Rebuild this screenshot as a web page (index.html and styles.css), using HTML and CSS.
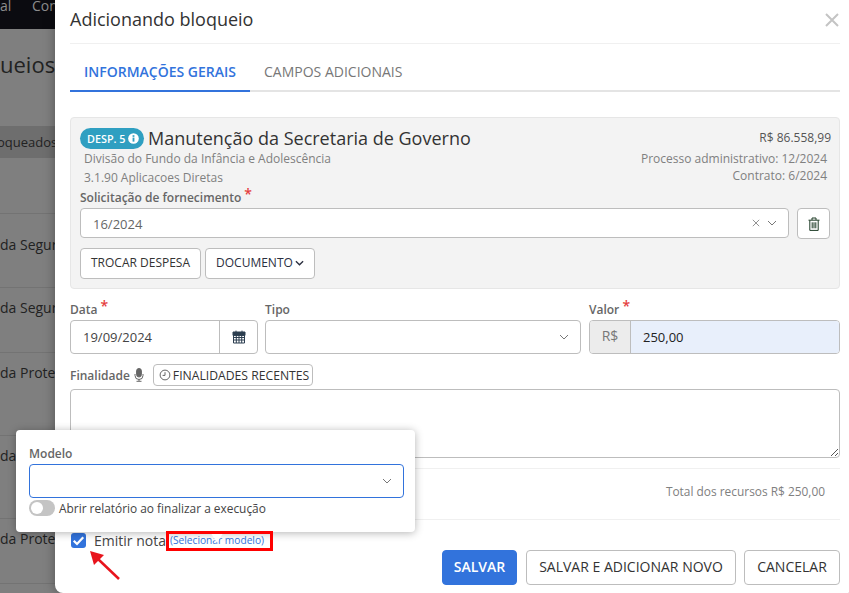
FILE: index.html
```html
<!DOCTYPE html>
<html lang="pt-BR">
<head>
    <meta charset="UTF-8">
    <meta name="viewport" content="width=device-width, initial-scale=1.0">
    <title>Adicionando bloqueio</title>
    <link rel="stylesheet" href="styles.css">
</head>
<body>
    <!-- pagina por tras do modal -->
    <div class="page">
        <nav class="navbar"><span class="nav-one">al</span><span class="nav-two">Con</span></nav>
        <div class="page-title">ueios <span class="page-hint"></span></div>
        <div class="page-tab">oqueados</div>
        <div class="page-row first">da Segura</div>
        <div class="page-row short">da Segura</div>
        <div class="page-row">da Proteg</div>
        <div class="page-row">da</div>
        <div class="page-row short">da Proteg</div>
        <div class="page-row"></div>
    </div>

    <div class="modal">
        <header class="modal-header">
            <h1>Adicionando bloqueio</h1>
            <svg class="close-icon" viewBox="0 0 14 14"><path d="M1 1l12 12M13 1L1 13"/></svg>
        </header>

        <div class="tabs">
            <span class="tab active">INFORMAÇÕES GERAIS</span>
            <span class="tab">CAMPOS ADICIONAIS</span>
        </div>

        <section class="expense-card">
            <div class="expense-top">
                <div>
                    <div class="expense-title">
                        <span class="badge">DESP. 5
                            <svg viewBox="0 0 12 12"><circle cx="6" cy="6" r="5.8" fill="#fff"/><rect x="5" y="5" width="2" height="4.4" fill="#2f9fc1"/><rect x="5" y="2.4" width="2" height="1.8" fill="#2f9fc1"/></svg>
                        </span>
                        <span class="expense-name">Manutenção da Secretaria de Governo</span>
                    </div>
                    <p class="expense-sub">Divisão do Fundo da Infância e Adolescência</p>
                    <p class="expense-sub">3.1.90 Aplicacoes Diretas</p>
                </div>
                <div class="expense-right">
                    <div class="expense-total">R$ 86.558,99</div>
                    <p>Processo administrativo: 12/2024</p>
                    <p>Contrato: 6/2024</p>
                </div>
            </div>

            <label class="field-label">Solicitação de fornecimento <span class="req">*</span></label>
            <div class="supply-row">
                <div class="select supply-select">
                    <span>16/2024</span>
                    <svg class="clear-icon" viewBox="0 0 10 10"><path d="M1 1l8 8M9 1L1 9"/></svg>
                    <svg class="chevron" viewBox="0 0 10 6"><path d="M1 1l4 4 4-4"/></svg>
                </div>
                <button class="btn btn-trash" type="button">
                    <svg viewBox="0 0 12 14"><path d="M.5 3.2h11M4 3V1h4V3M1.8 3.4v10h8.4V3.4M4.2 5.3v6M6 5.3v6M7.8 5.3v6"/></svg>
                </button>
            </div>
            <div class="card-buttons">
                <button class="btn" type="button">TROCAR DESPESA</button>
                <button class="btn btn-doc" type="button">DOCUMENTO<svg viewBox="0 0 10 6"><path d="M1 1l4 4 4-4"/></svg></button>
            </div>
        </section>

        <div class="form-row">
            <div class="col-date">
                <label class="field-label">Data <span class="req">*</span></label>
                <div class="input-group">
                    <span class="input-text">19/09/2024</span>
                    <span class="addon-date">
                        <svg viewBox="0 0 14 14"><path class="cal-top" d="M1 2h12v3.4H1z"/><path d="M1.5 2.5h11v10.5h-11zM1.5 7.5h11M1.5 10h11M4.3 5V13M7 5V13M9.7 5V13M4 .6v2.4M10 .6v2.4"/></svg>
                    </span>
                </div>
            </div>
            <div class="col-type">
                <label class="field-label">Tipo</label>
                <div class="select tall-select">
                    <svg class="chevron" viewBox="0 0 10 6"><path d="M1 1l4 4 4-4"/></svg>
                </div>
            </div>
            <div class="col-value">
                <label class="field-label">Valor <span class="req">*</span></label>
                <div class="input-group">
                    <span class="addon-money">R$</span>
                    <span class="input-money">250,00</span>
                </div>
            </div>
        </div>

        <div class="purpose-row">
            <label class="field-label">Finalidade</label>
            <svg class="mic-icon" viewBox="0 0 10 14"><rect x="2.6" y="0.5" width="4.8" height="8.5" rx="2.4" fill="#666"/><path d="M1 6v1.5a4 4 0 0 0 8 0V6M5 11.5V13M2.5 13.3h5"/></svg>
            <button class="btn btn-recent" type="button">
                <svg viewBox="0 0 12 12"><circle cx="6" cy="6" r="4.9"/><path d="M6 3.2V6.4H3.6"/></svg>FINALIDADES RECENTES
            </button>
        </div>
        <div class="textarea">
            <svg viewBox="0 0 8 8"><path d="M1 8l7-7M5 8l3-3"/></svg>
        </div>

        <div class="total-row">Total dos recursos R$ 250,00</div>

        <footer class="modal-footer">
            <div class="emit">
                <span class="checkbox"><svg viewBox="0 0 12 12"><path d="M2.2 6.2l2.6 2.6 5-5.4"/></svg></span>
                <span class="emit-label">Emitir nota</span>
                <a class="emit-link" href="#">(Selecionar modelo)</a>
            </div>
            <div class="footer-buttons">
                <button class="btn btn-primary" type="button">SALVAR</button>
                <button class="btn btn-large btn-new" type="button">SALVAR E ADICIONAR NOVO</button>
                <button class="btn btn-large btn-cancel" type="button">CANCELAR</button>
            </div>
        </footer>
    </div>

    <!-- popover do modelo -->
    <div class="popover">
        <label class="field-label">Modelo</label>
        <div class="select model-select">
            <svg class="chevron" viewBox="0 0 10 6"><path d="M1 1l4 4 4-4"/></svg>
        </div>
        <div class="toggle-row">
            <span class="toggle"></span>
            <span>Abrir relatório ao finalizar a execução</span>
        </div>
    </div>

    <!-- anotacoes vermelhas sobre o print -->
    <div class="red-box"></div>
    <svg class="red-arrow" viewBox="0 0 34 34"><path class="arrow-line" d="M30 29L9 9"/><path class="arrow-head" d="M1 1l14 4-10 10z"/></svg>
</body>
</html>
```

FILE: styles.css
```css
* {
    box-sizing: border-box;
}

body {
    margin: 0;
    width: 849px;
    height: 593px;
    overflow: hidden;
    position: relative;
    background: #7f7f7f;
    font-family: "Open Sans", "Liberation Sans", sans-serif;
    font-size: 13px;
    color: #333;
}

p {
    margin: 0;
}

svg {
    display: block;
    fill: none;
    stroke: currentColor;
}

/* fundo */
.page {
    height: 593px;
    overflow: hidden;
    color: #222;
}

.navbar {
    height: 29px;
    background: #0b0b10;
    color: #8d8d8d;
    font-size: 14px;
    line-height: 11px;
    display: flex;
}

.nav-one {
    width: 32px;
}

.page-title {
    margin-top: 20px;
    font-size: 22px;
    line-height: 30px;
    height: 77px;
}

.page-hint {
    display: inline-block;
    width: 2px;
    height: 8px;
    background: #7a6220;
}

.page-tab {
    height: 32px;
    background: #6e6e6e;
    line-height: 32px;
    margin-bottom: 55px;
    text-indent: -3px;
}

.page-row {
    height: 83px;
    border-top: 1px solid #737373;
    font-size: 14px;
    line-height: 20px;
    padding-top: 10px;
}

.page-row.first {
    height: 74px;
    padding-top: 21px;
}

.page-row.short {
    height: 65px;
}

/* modal */
.modal {
    position: absolute;
    left: 55px;
    top: -10px;
    width: 800px;
    height: 603px;
    padding: 10px 15px 0;
    background: #fff;
    border-radius: 8px;
    box-shadow: 0 0 12px rgba(0, 0, 0, 0.35);
}

.modal-header {
    height: 44px;
    border-bottom: 1px solid #f0f0f0;
    display: flex;
    justify-content: space-between;
    align-items: flex-start;
}

.modal-header h1 {
    margin: 0;
    font-size: 18px;
    font-weight: 400;
    line-height: 20px;
    padding-top: 9px;
    color: #333;
}

.close-icon {
    width: 14px;
    height: 14px;
    margin-top: 13px;
    margin-right: 1px;
    color: #c4c4c4;
    stroke-width: 2;
}

.tabs {
    margin-top: 11px;
    height: 37px;
    border-bottom: 2px solid #e4e4e4;
    display: flex;
}

.tab {
    padding: 7px 14px 0;
    height: 37px;
    font-size: 14px;
    line-height: 20px;
    color: #777;
}

.tab.active {
    color: #3273dc;
    font-weight: 600;
    border-bottom: 2px solid #3273dc;
}

.expense-card {
    margin-top: 25px;
    height: 172px;
    padding: 9px 9px 0;
    background: #f3f3f3;
    border: 1px solid #e6e6e6;
    border-radius: 4px;
}

.expense-top {
    display: flex;
    justify-content: space-between;
    height: 61px;
}

.expense-title {
    display: flex;
    align-items: center;
    height: 22px;
    gap: 4px;
}

.badge {
    display: flex;
    align-items: center;
    gap: 3px;
    height: 21px;
    width: 64px;
    padding-left: 7px;
    background: #2f9fc1;
    color: #fff;
    border-radius: 11px;
    font-size: 10.8px;
    font-weight: 600;
}

.badge svg {
    width: 11px;
    height: 11px;
    stroke: none;
}

.expense-name {
    font-size: 18px;
    line-height: 22px;
    color: #333;
}

.expense-sub {
    margin-left: 4px;
    font-size: 12px;
    line-height: 19px;
    color: #808080;
}

.expense-right {
    text-align: right;
    font-size: 12px;
    line-height: 17px;
    color: #808080;
    padding: 0 3px 0 0;
}

.expense-total {
    margin-right: -4px;
    height: 23px;
    line-height: 22px;
    color: #555;
}

.field-label {
    display: block;
    font-size: 12px;
    font-weight: 600;
    line-height: 20px;
    color: #666;
}

.req {
    color: #e53e3e;
    font-size: 14px;
    line-height: 10px;
    vertical-align: 3px;
}

.supply-row {
    display: flex;
    gap: 8px;
}

.select {
    position: relative;
    display: flex;
    align-items: center;
    justify-content: flex-end;
    background: #fff;
    border: 1px solid #bdbdbd;
    border-radius: 4px;
}

.supply-select {
    flex: 1;
    height: 30px;
    padding: 0 11px 0 12px;
    gap: 5px;
    color: #666;
}

.supply-select span {
    margin-right: auto;
    padding-top: 2px;
}

.chevron {
    width: 10px;
    height: 6px;
    color: #777;
}

.clear-icon {
    width: 8px;
    height: 8px;
    color: #777;
    margin-right: 2px;
}

.btn {
    height: 31px;
    padding: 0 10px 2px;
    background: #fff;
    border: 1px solid #bdbdbd;
    border-radius: 4px;
    font-family: inherit;
    font-size: 12px;
    color: #333;
}

.btn-trash {
    width: 33px;
    padding: 0;
    display: flex;
    align-items: center;
    justify-content: center;
}

.btn-trash svg {
    width: 12px;
    height: 14px;
    color: #1d3b25;
    stroke-width: 1;
}

.card-buttons {
    display: flex;
    gap: 4px;
    margin-top: 9px;
}

.btn-doc {
    display: flex;
    align-items: center;
    color: #2b2f3f;
    gap: 2px;
}

.btn-doc svg {
    width: 9px;
    height: 6px;
    stroke-width: 1.5;
}

.form-row {
    display: flex;
    gap: 7px;
    margin-top: 11px;
}

.col-date {
    width: 188px;
}

.col-type {
    width: 316px;
    margin-right: 1px;
}

.col-value {
    flex: 1;
}

.input-group {
    display: flex;
    height: 34px;
    border: 1px solid #bdbdbd;
    border-radius: 4px;
    overflow: hidden;
    align-items: stretch;
}

.input-text {
    flex: 1;
    padding-left: 12px;
    line-height: 33px;
    color: #444;
}

.addon-date {
    width: 38px;
    border-left: 1px solid #bdbdbd;
    display: flex;
    align-items: center;
    justify-content: center;
}

.addon-date svg {
    width: 14px;
    height: 14px;
    color: #2c3e50;
}

.cal-top {
    fill: currentColor;
}

.tall-select {
    height: 34px;
    padding-right: 11px;
}

.addon-money {
    width: 41px;
    background: #ececec;
    border-right: 1px solid #bdbdbd;
    text-align: center;
    font-size: 14px;
    line-height: 29px;
    color: #777;
}

.input-money {
    flex: 1;
    background: #e8effb;
    padding-left: 12px;
    line-height: 33px;
    color: #222;
}

.purpose-row {
    display: flex;
    align-items: center;
    height: 22px;
    margin-top: 10px;
}

.purpose-row .field-label {
    padding-top: 1px;
}

.mic-icon {
    width: 10px;
    height: 14px;
    margin: 0 9px 0 4px;
    color: #666;
}

.btn-recent {
    display: flex;
    align-items: center;
    gap: 2px;
    height: 22px;
    padding: 0 5px;
    width: 160px;
    font-size: 12.2px;
    white-space: nowrap;
}

.btn-recent svg {
    width: 12px;
    height: 12px;
    color: #666;
    flex: none;
}

.textarea {
    position: relative;
    height: 69px;
    margin-top: 3px;
    border: 1px solid #bdbdbd;
    border-radius: 4px;
}

.textarea svg {
    position: absolute;
    right: 1px;
    bottom: 1px;
    width: 8px;
    height: 8px;
    color: #555;
}

.total-row {
    height: 52px;
    margin-top: 10px;
    padding: 13px 15px 0 0;
    border-top: 1px solid #f0f0f0;
    border-bottom: 1px solid #f0f0f0;
    text-align: right;
    font-size: 11.9px;
    line-height: 18px;
    color: #808080;
}

.modal-footer {
    position: relative;
    height: 73px;
    display: flex;
    justify-content: flex-end;
    align-items: flex-start;
}

.emit {
    position: absolute;
    left: 1px;
    top: 9px;
    display: flex;
    align-items: center;
    height: 22px;
}

.checkbox {
    width: 15px;
    height: 15px;
    background: #3273dc;
    border-radius: 3px;
    color: #fff;
}

.checkbox svg {
    width: 15px;
    height: 15px;
    stroke-width: 1.8;
}

.emit-label {
    margin-left: 8px;
    font-size: 14px;
    color: #444;
}

.emit-link {
    margin-left: 4px;
    font-size: 10.2px;
    line-height: 14px;
    color: #3273dc;
    text-decoration: none;
    white-space: nowrap;
}

.footer-buttons {
    display: flex;
    gap: 8px;
    margin-top: 30px;
}

.btn-large {
    height: 35px;
    font-size: 14px;
}

.btn-new {
    width: 210px;
}

.btn-cancel {
    width: 96px;
}

.btn-primary {
    width: 75px;
    margin-right: 1px;
    height: 35px;
    background: #3273dc;
    border-color: #3273dc;
    color: #fff;
    font-size: 14px;
    font-weight: 600;
}

/* popover */
.popover {
    position: absolute;
    left: 16px;
    top: 430px;
    width: 399px;
    height: 102px;
    padding: 14px 11px 0 13px;
    background: #fff;
    border-radius: 4px;
    box-shadow: 0 1px 8px rgba(0, 0, 0, 0.3);
}

.popover::after {
    content: "";
    position: absolute;
    left: 193px;
    top: 100px;
    border-style: solid;
    border-width: 13px 8px 0;
    border-color: #fff transparent transparent;
}

.model-select {
    height: 34px;
    padding-right: 11px;
    border-color: #3273dc;
}

.toggle-row {
    display: flex;
    align-items: center;
    gap: 4px;
    height: 18px;
    margin-top: 1px;
    font-size: 11.9px;
    color: #444;
}

.toggle {
    position: relative;
    width: 26px;
    height: 16px;
    background: #c4c4c4;
    border-radius: 8px;
}

.toggle::before {
    content: "";
    position: absolute;
    left: 2px;
    top: 2px;
    width: 12px;
    height: 12px;
    background: #fff;
    border-radius: 50%;
}

.red-box {
    position: absolute;
    left: 166px;
    top: 531px;
    width: 107px;
    height: 20px;
    border: 3px solid #f00;
}

.red-arrow {
    position: absolute;
    left: 89px;
    top: 550px;
    width: 34px;
    height: 34px;
}

.arrow-line {
    stroke: #e8141c;
    stroke-width: 2.5;
}

.arrow-head {
    fill: #e8141c;
    stroke: none;
}
```
